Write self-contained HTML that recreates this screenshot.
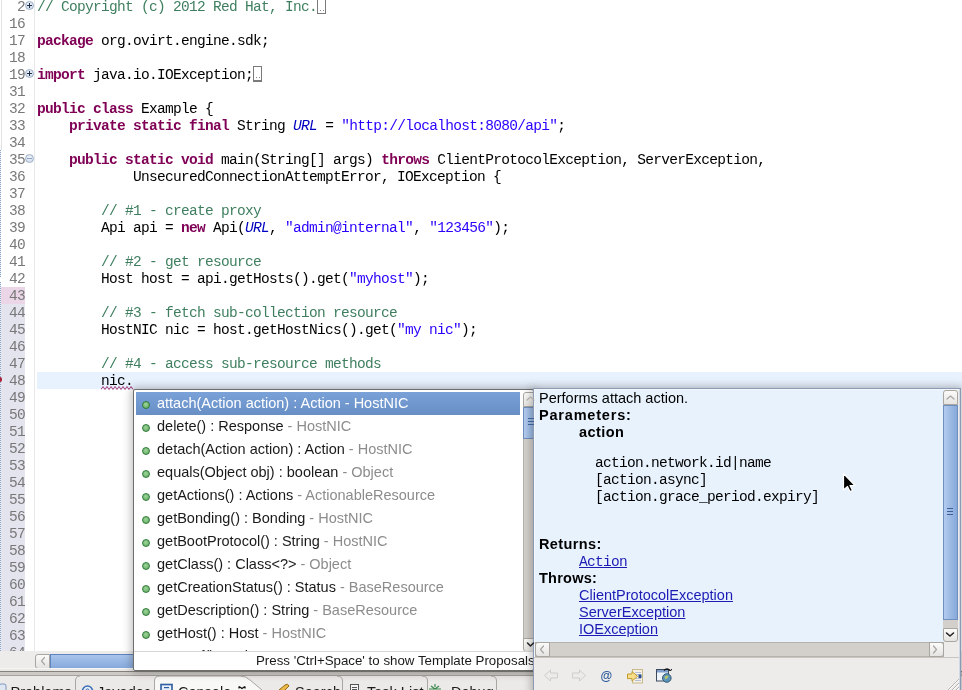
<!DOCTYPE html>
<html><head><meta charset="utf-8">
<style>
*{margin:0;padding:0;box-sizing:border-box}
html,body{width:962px;height:690px;overflow:hidden;background:#edeceb}
body{position:relative;font-family:"Liberation Sans",sans-serif;-webkit-font-smoothing:antialiased}
#editor,#props,#doc,svg.a{will-change:transform}
.a{position:absolute}
#editor{position:absolute;left:0;top:0;width:962px;height:651px;background:#fff;overflow:hidden}
#gutl{position:absolute;left:1px;top:0;width:1px;height:150px;background:#e2e2e2}
#dots{position:absolute;left:0;top:150px;width:1px;height:501px;background:repeating-linear-gradient(#8aa2c8 0 1px,#eef2f8 1px 2px)}
#dgap{position:absolute;left:0;top:277px;width:1px;height:5px;background:#fff}
#lav{position:absolute;left:1px;top:304px;width:24px;height:347px;background:#e4e4ef}
#pink{position:absolute;left:1px;top:287px;width:24px;height:17px;background:#ead6e6}
#redm{position:absolute;left:0;top:376.5px;width:2px;height:5px;border-radius:0 3px 3px 0;background:#a8203a}
#sep{position:absolute;left:34px;top:0;width:1px;height:651px;background:#e9e9e9}
.ln{position:absolute;left:0;width:25px;height:17px;text-align:right;font:14.5px/17px "Liberation Mono",monospace;letter-spacing:-0.7px;color:#787878}
.cl{position:absolute;left:37px;height:17px;white-space:pre;font:14.5px/17px "Liberation Mono",monospace;letter-spacing:-0.7px;color:#000}
.k{color:#7f0055;font-weight:bold}
.c{color:#3f7f5f}
.s{color:#2a00ff}
.f{color:#0000c0;font-style:italic}
.box{position:absolute;width:9px;height:15px;border:1px solid #7a7a7a;background:#fff}
.box:after{content:"";position:absolute;left:2px;bottom:2px;width:1px;height:1px;background:#888;box-shadow:3px 0 #888}
.fold{position:absolute;left:25px;width:9px;height:9px;border-radius:50%;background:radial-gradient(circle at 50% 40%,#f2f6fb,#c5d3e6);border:1px solid #9fb0c8}
.fold:before{content:"";position:absolute;left:1px;top:3px;width:5px;height:1px;background:#1c2b46}
.fold.p:after{content:"";position:absolute;left:3px;top:1px;width:1px;height:5px;background:#1c2b46}
.fold.m:before{background:#8fa2bf}
#curline{position:absolute;left:37px;top:372px;width:925px;height:17px;background:#e8f2fe}
#sq{position:absolute;left:101px;top:385.5px;width:33px;height:4px}
/* editor h scrollbar */
#ehs{position:absolute;left:35px;top:654px;width:500px;height:15px}
#ehs .btn{position:absolute;left:0;top:0;width:15px;height:15px;border:1px solid #a9a6a2;border-radius:3px 0 0 3px;background:linear-gradient(#fbfbfa,#e4e2df)}
#ehs .thumb{position:absolute;left:15px;top:0;width:485px;height:15px;border:1px solid #5d83c0;background:linear-gradient(#a9c5ec,#86a9dc)}
#hsep{position:absolute;left:0;top:671px;width:962px;height:1px;background:#b8b5b1}
#hsep2{position:absolute;left:0;top:672px;width:962px;height:1px;background:#fafafa}
/* tabs */
.tab{position:absolute;top:676px;height:20px;border:1px solid #bdbab5;border-bottom:none;border-radius:8px 8px 0 0;background:#e9e8e6;font:14px/20px "Liberation Sans",sans-serif;color:#1a1a1a;white-space:pre}
.tab.act{background:#f7f7f6;border-radius:8px 14px 0 0}
.tab span{position:absolute;top:-1px}
/* proposals */
#pshadow{position:absolute;left:126px;top:381px;width:420px;height:300px;box-shadow:0 0 8px 2px rgba(0,0,0,0.25);border-radius:3px;left:133px;top:389px;width:401px;height:282px}
#props{position:absolute;left:133px;top:389px;width:401px;height:282px;background:#fff;border:1px solid #6e6e6e;border-radius:2px;overflow:hidden}
.pr{position:absolute;left:2px;width:385px;height:22px;font:14.5px/22px "Liberation Sans",sans-serif;color:#1a1a1a;white-space:pre}
.pr.sel{background:linear-gradient(#7ba2d8,#6890c6);box-shadow:0 1px 0 #6a8fc4;color:#fff;width:384px}
.pr .q{color:#8c8c8c}
.pr.sel .q{color:#fff}
.dot{position:absolute;left:6px;top:9px;width:8px;height:8px;border-radius:50%;background:radial-gradient(circle at 45% 40%,#9ed49a,#5aa85a);border:1px solid #2f7a3a}
.pt{position:absolute;left:21px;top:0}
#plist{position:absolute;left:0;top:0;width:389px;height:262px;overflow:hidden}
#pvs{position:absolute;left:389px;top:2px;width:15px;height:260px}
#pvs .up{position:absolute;left:0;top:0;width:15px;height:15px;border:1px solid #a9a6a2;border-radius:3px 3px 0 0;background:linear-gradient(#fbfbfa,#e6e4e1)}
#pvs .th{position:absolute;left:0;top:15px;width:15px;height:32px;border:1px solid #6f8fbf;background:linear-gradient(90deg,#b3cbef,#8fb0df)}
#pvs .tr{position:absolute;left:0;top:47px;width:15px;height:200px;background:#d3d0cc;border-left:1px solid #b5b2ae}
#pvs .dn{position:absolute;left:0;top:246px;width:15px;height:14px;border:1px solid #a9a6a2;border-radius:0 0 3px 3px;background:linear-gradient(#fbfbfa,#e6e4e1)}
#pstat{position:absolute;left:0;top:261px;width:401px;height:1px;background:#d8d8d8}
#pstatt{position:absolute;left:122px;top:261px;font:13.3px/19px "Liberation Sans",sans-serif;color:#1a1a1a;white-space:pre}
/* doc */
#dshadow{position:absolute;left:533px;top:388px;width:428px;height:310px;box-shadow:0 0 8px 2px rgba(0,0,0,0.25)}
#doc{position:absolute;left:533px;top:388px;width:428px;height:310px;background:#edeceb;border:1px solid #8b9bb3;border-bottom:none;overflow:hidden}
#dcont{position:absolute;left:1px;top:1px;width:409px;height:252px;background:#e8f2fd}
.dt{position:absolute;left:4px;white-space:pre;font:14.5px/17px "Liberation Sans",sans-serif;color:#000}
.db{font-weight:bold;letter-spacing:0.5px}
.dm{position:absolute;white-space:pre;font:14.5px/17px "Liberation Mono",monospace;letter-spacing:-0.7px;color:#000}
.lk{color:#1c1cb4;text-decoration:underline}
#dvs{position:absolute;left:409px;top:1px;width:15px;height:253px}
#dvs .up{position:absolute;left:0;top:0;width:15px;height:15px;border:1px solid #a9a6a2;border-radius:3px 3px 0 0;background:linear-gradient(#fbfbfa,#e6e4e1)}
#dvs .th{position:absolute;left:0;top:15px;width:15px;height:215px;border:1px solid #6f8fbf;background:linear-gradient(90deg,#b3cbef,#86a8da)}
#dvs .tr{position:absolute;left:0;top:230px;width:15px;height:8px;background:#d3d0cc}
#dvs .dn{position:absolute;left:0;top:238px;width:15px;height:14px;border:1px solid #a9a6a2;border-radius:0 0 3px 3px;background:linear-gradient(#fbfbfa,#e6e4e1)}
#dhs{position:absolute;left:1px;top:253px;width:409px;height:15px;background:#d3d0cc;border:1px solid #b5b2ae}
#dhs .l{position:absolute;left:-1px;top:-1px;width:15px;height:15px;border:1px solid #a9a6a2;border-radius:3px 0 0 3px;background:linear-gradient(#fbfbfa,#e6e4e1)}
#dhs .r{position:absolute;right:-1px;top:-1px;width:15px;height:15px;border:1px solid #a9a6a2;border-radius:0 3px 3px 0;background:linear-gradient(#fbfbfa,#e6e4e1)}
#dtsep{position:absolute;left:0px;top:268px;width:425px;height:1px;background:#c8c5c1}
</style></head><body>
<div id="editor">
<div id="gutl"></div>
<div id="dots"></div><div id="dgap"></div>
<div id="pink"></div>
<div id="lav"></div>
<div id="redm"></div>
<div id="sep"></div>
<div class="ln" style="top:-1px">2</div>
<div class="ln" style="top:16px">16</div>
<div class="ln" style="top:33px">17</div>
<div class="ln" style="top:50px">18</div>
<div class="ln" style="top:67px">19</div>
<div class="ln" style="top:84px">31</div>
<div class="ln" style="top:101px">32</div>
<div class="ln" style="top:118px">33</div>
<div class="ln" style="top:135px">34</div>
<div class="ln" style="top:152px">35</div>
<div class="ln" style="top:169px">36</div>
<div class="ln" style="top:186px">37</div>
<div class="ln" style="top:203px">38</div>
<div class="ln" style="top:220px">39</div>
<div class="ln" style="top:237px">40</div>
<div class="ln" style="top:254px">41</div>
<div class="ln" style="top:271px">42</div>
<div class="ln" style="top:288px">43</div>
<div class="ln" style="top:305px">44</div>
<div class="ln" style="top:322px">45</div>
<div class="ln" style="top:339px">46</div>
<div class="ln" style="top:356px">47</div>
<div class="ln" style="top:373px">48</div>
<div class="ln" style="top:390px">49</div>
<div class="ln" style="top:407px">50</div>
<div class="ln" style="top:424px">51</div>
<div class="ln" style="top:441px">52</div>
<div class="ln" style="top:458px">53</div>
<div class="ln" style="top:475px">54</div>
<div class="ln" style="top:492px">55</div>
<div class="ln" style="top:509px">56</div>
<div class="ln" style="top:526px">57</div>
<div class="ln" style="top:543px">58</div>
<div class="ln" style="top:560px">59</div>
<div class="ln" style="top:577px">60</div>
<div class="ln" style="top:594px">61</div>
<div class="ln" style="top:611px">62</div>
<div class="ln" style="top:628px">63</div>
<div class="ln" style="top:645px">64</div>
<div class="fold p" style="top:1px"></div>
<div class="fold p" style="top:69px"></div>
<div class="fold m" style="top:154px"></div>
<div id="curline"></div>
<div class="cl" style="top:-1px"><span class="c">// Copyright (c) 2012 Red Hat, Inc.</span><span class="box"></span></div>
<div class="cl" style="top:16px"></div>
<div class="cl" style="top:33px"><b class="k">package</b> org.ovirt.engine.sdk;</div>
<div class="cl" style="top:50px"></div>
<div class="cl" style="top:67px"><b class="k">import</b> java.io.IOException;<span class="box"></span></div>
<div class="cl" style="top:84px"></div>
<div class="cl" style="top:101px"><b class="k">public</b> <b class="k">class</b> Example {</div>
<div class="cl" style="top:118px">    <b class="k">private</b> <b class="k">static</b> <b class="k">final</b> String <i class="f">URL</i> = <span class="s">&quot;http://localhost:8080/api&quot;</span>;</div>
<div class="cl" style="top:135px"></div>
<div class="cl" style="top:152px">    <b class="k">public</b> <b class="k">static</b> <b class="k">void</b> main(String[] args) <b class="k">throws</b> ClientProtocolException, ServerException,</div>
<div class="cl" style="top:169px">            UnsecuredConnectionAttemptError, IOException {</div>
<div class="cl" style="top:186px"></div>
<div class="cl" style="top:203px">        <span class="c">// #1 - create proxy</span></div>
<div class="cl" style="top:220px">        Api api = <b class="k">new</b> Api(<i class="f">URL</i>, <span class="s">&quot;admin@internal&quot;</span>, <span class="s">&quot;123456&quot;</span>);</div>
<div class="cl" style="top:237px"></div>
<div class="cl" style="top:254px">        <span class="c">// #2 - get resource</span></div>
<div class="cl" style="top:271px">        Host host = api.getHosts().get(<span class="s">&quot;myhost&quot;</span>);</div>
<div class="cl" style="top:288px"></div>
<div class="cl" style="top:305px">        <span class="c">// #3 - fetch sub-collection resource</span></div>
<div class="cl" style="top:322px">        HostNIC nic = host.getHostNics().get(<span class="s">&quot;my nic&quot;</span>);</div>
<div class="cl" style="top:339px"></div>
<div class="cl" style="top:356px">        <span class="c">// #4 - access sub-resource methods</span></div>
<div class="cl" style="top:373px">        <span class="sq">nic.</span></div>
<div class="cl" style="top:390px"></div>
<div class="cl" style="top:407px"></div>
<div class="cl" style="top:424px"></div>
<div class="cl" style="top:441px"></div>
<div class="cl" style="top:458px"></div>
<div class="cl" style="top:475px"></div>
<div class="cl" style="top:492px"></div>
<div class="cl" style="top:509px"></div>
<div class="cl" style="top:526px"></div>
<div class="cl" style="top:543px"></div>
<div class="cl" style="top:560px"></div>
<div class="cl" style="top:577px"></div>
<div class="cl" style="top:594px"></div>
<div class="cl" style="top:611px"></div>
<div class="cl" style="top:628px"></div>
<div class="cl" style="top:645px"></div>
<div class="box" style="left:317px;top:-1px"></div>
<div class="box" style="left:253px;top:66px"></div>
<svg id="sq" width="33" height="4" viewBox="0 0 33 4"><polyline points="0,3.5 2,0.5 4,3.5 6,0.5 8,3.5 10,0.5 12,3.5 14,0.5 16,3.5 18,0.5 20,3.5 22,0.5 24,3.5 26,0.5 28,3.5 30,0.5 32,3.5" fill="none" stroke="#a23a78" stroke-width="1"/></svg>
</div>
<div id="ehs"><div class="btn"></div><div class="thumb"></div></div>
<svg class="a" style="left:0;top:668px" width="962" height="22" viewBox="0 668 962 22">
<rect x="0" y="668" width="962" height="1" fill="#f6f5f4"/>
<rect x="0" y="669" width="962" height="2" fill="#e9e8e6"/>
<rect x="0" y="671" width="962" height="1" fill="#85817c"/>
<rect x="0" y="672" width="962" height="3" fill="#cdcac6"/>
<rect x="0" y="675" width="962" height="1" fill="#a6a29d"/>
<rect x="0" y="676" width="962" height="14" fill="#ebeae8"/>
<!-- Javadoc left edge -->
<path d="M75.5,690 V681 Q75.5,676 80,676" fill="none" stroke="#a9a5a0" stroke-width="1"/>
<!-- Console active -->
<path d="M154.5,690 V681 Q154.5,676 160,676 H240 Q246,676 250,680 L262,690 Z" fill="#f8f8f7"/>
<path d="M154.5,690 V681 Q154.5,676 160,676 H240 Q246,676 250,680 L262,690" fill="none" stroke="#a9a5a0" stroke-width="1"/>
<!-- Search right edge -->
<path d="M337,676 Q342.5,676 342.5,681 V690" fill="none" stroke="#a9a5a0" stroke-width="1"/>
<path d="M422,676 Q427.5,676 427.5,681 V690" fill="none" stroke="#a9a5a0" stroke-width="1"/>
<path d="M491,676 Q496.5,676 496.5,681 V690" fill="none" stroke="#a9a5a0" stroke-width="1"/>
<!-- icons -->
<rect x="-1" y="684" width="7" height="8" rx="2" fill="#dfe7f2" stroke="#7e98c0"/>
<circle cx="87.5" cy="691" r="5" fill="#e9f0fa" stroke="#3c6fb5" stroke-width="1.6"/><circle cx="87.5" cy="690.5" r="1.6" fill="none" stroke="#3c6fb5" stroke-width="1"/>
<rect x="161" y="684.5" width="11" height="10" fill="#e6effb" stroke="#2d5d9f" stroke-width="1.6"/>
<rect x="164" y="687" width="5" height="1.2" fill="#2d5d9f"/>
<path d="M239,686.5 l3,2 l3,-2 M239,686.5 v2 M245,686.5 v2" fill="none" stroke="#111" stroke-width="1.3"/>
<path d="M279,690 l6,-5 q3,-2 4,1 l-5,5z" fill="#e8b84a" stroke="#9a6a10" stroke-width="1"/>
<rect x="350.5" y="684.5" width="8" height="9" fill="#f4f4f4" stroke="#555"/>
<path d="M352,687.5 h5 M352,689.5 h5" stroke="#555"/>
<path d="M431,686 l4,3 l4,-3 M435,684 v3 M429,689 h12" fill="none" stroke="#3b8a4e" stroke-width="1.2"/>
<text x="10.5" y="696.5" font-family="Liberation Sans" font-size="14.5" fill="#1b1b1b">Problems</text>
<text x="97" y="696.5" font-family="Liberation Sans" font-size="14.5" fill="#1b1b1b">Javadoc</text>
<text x="178" y="696.5" font-family="Liberation Sans" font-size="14.5" fill="#1b1b1b">Console</text>
<text x="295" y="696.5" font-family="Liberation Sans" font-size="14.5" fill="#1b1b1b">Search</text>
<text x="367" y="696.5" font-family="Liberation Sans" font-size="14.5" fill="#1b1b1b">Task List</text>
<text x="451" y="696.5" font-family="Liberation Sans" font-size="14.5" fill="#1b1b1b">Debug</text>
</svg>

<div id="pshadow"></div>
<div id="props">
<div id="plist">
<div class="pr sel" style="top:2px"><span class="dot"></span><span class="pt">attach(Action action) : Action<span class="q"> - HostNIC</span></span></div>
<div class="pr" style="top:25px"><span class="dot"></span><span class="pt">delete() : Response<span class="q"> - HostNIC</span></span></div>
<div class="pr" style="top:48px"><span class="dot"></span><span class="pt">detach(Action action) : Action<span class="q"> - HostNIC</span></span></div>
<div class="pr" style="top:71px"><span class="dot"></span><span class="pt">equals(Object obj) : boolean<span class="q"> - Object</span></span></div>
<div class="pr" style="top:94px"><span class="dot"></span><span class="pt">getActions() : Actions<span class="q"> - ActionableResource</span></span></div>
<div class="pr" style="top:117px"><span class="dot"></span><span class="pt">getBonding() : Bonding<span class="q"> - HostNIC</span></span></div>
<div class="pr" style="top:140px"><span class="dot"></span><span class="pt">getBootProtocol() : String<span class="q"> - HostNIC</span></span></div>
<div class="pr" style="top:163px"><span class="dot"></span><span class="pt">getClass() : Class&lt;?&gt;<span class="q"> - Object</span></span></div>
<div class="pr" style="top:186px"><span class="dot"></span><span class="pt">getCreationStatus() : Status<span class="q"> - BaseResource</span></span></div>
<div class="pr" style="top:209px"><span class="dot"></span><span class="pt">getDescription() : String<span class="q"> - BaseResource</span></span></div>
<div class="pr" style="top:232px"><span class="dot"></span><span class="pt">getHost() : Host<span class="q"> - HostNIC</span></span></div>
<div class="pr" style="top:255px"><span class="dot"></span><span class="pt">getHref() : String<span class="q"> - BaseResource</span></span></div>
</div>
<div id="pvs"><div class="up"></div><div class="th"></div><div class="tr"></div><div class="dn"></div></div>
<div id="pstat"></div>
<div id="pstatt">Press 'Ctrl+Space' to show Template Proposals</div>
</div>
<div id="dshadow"></div>
<div id="doc">
<div class="a" style="left:0;top:0;width:426px;height:1px;background:#f4f8fd"></div><div class="a" style="left:0;top:0;width:1px;height:268px;background:#f4f8fd"></div><div class="a" style="left:425px;top:0;width:1px;height:310px;background:#cfd8e4"></div>
<div id="dcont">
<div class="dt" style="top:0px">Performs attach action.</div>
<div class="dt db" style="top:17px;letter-spacing:0.8px">Parameters:</div>
<div class="dt db" style="top:34px;left:44px;letter-spacing:0.45px">action</div>
<div class="dm" style="top:65px;left:60px">action.network.id|name</div>
<div class="dm" style="top:82px;left:60px">[action.async]</div>
<div class="dm" style="top:99px;left:60px">[action.grace_period.expiry]</div>
<div class="dt db" style="top:146px;letter-spacing:0.4px">Returns:</div>
<div class="dm lk" style="top:164px;left:44px">Action</div>
<div class="dt db" style="top:180px;letter-spacing:0.25px">Throws:</div>
<div class="dt lk" style="top:197px;left:44px">ClientProtocolException</div>
<div class="dt lk" style="top:214px;left:44px">ServerException</div>
<div class="dt lk" style="top:231px;left:44px">IOException</div>
</div>
<div id="dvs"><div class="up"></div><div class="th"></div><div class="tr"></div><div class="dn"></div></div>
<div id="dhs"><div class="l"></div><div class="r"></div></div>
<div id="dtsep"></div>
<svg class="a" style="left:0;top:0" width="427" height="310" viewBox="533 388 427 310">
<path d="M543.5,674.5 L549.5,669 V672 H556.5 V677 H549.5 V680 Z" fill="#ecebe9" stroke="#cfcdc9" stroke-width="1" stroke-linejoin="round"/>
<path d="M584.5,674.5 L578.5,669 V672 H571.5 V677 H578.5 V680 Z" fill="#ecebe9" stroke="#cfcdc9" stroke-width="1" stroke-linejoin="round"/>
<text x="599.5" y="678.5" font-family="Liberation Sans" font-weight="bold" font-size="12" fill="#2d5a9a">@</text>
<rect x="631.5" y="668.5" width="10" height="13.5" fill="#f4f1e4" stroke="#c9b98e"/>
<path d="M634,671.5 h6 M634,673.5 h6 M634,677.5 h6 M634,679.5 h6" stroke="#b5c0d6"/>
<rect x="637.5" y="673.5" width="3" height="3.5" fill="#2a4f8f"/>
<path d="M626.5,673 h4.5 v-2.5 l5.5,4.8 l-5.5,4.8 v-2.5 h-4.5z" fill="#f7de8a" stroke="#c19a2e"/>
<rect x="655.5" y="668.5" width="12" height="11.5" fill="#eef4fa" stroke="#3d4a5e"/>
<rect x="656" y="669" width="11" height="2.5" fill="#7f9fcc"/>
<circle cx="665.8" cy="677" r="4.3" fill="#5e93b8" stroke="#2f5a78"/>
<path d="M663.5,676 q2,-2.5 4,-1 q-0.5,2.5 -3,3.5z" fill="#b6c86a"/>
<path d="M663,669.5 q3,-3 6,0" fill="none" stroke="#111" stroke-width="1.3"/>
<path d="M668,668.5 l1.5,1.5 l1.2,-2" fill="none" stroke="#111" stroke-width="1"/>
<path d="M946,690 l12,-12 M950,690 l8,-8 M954,690 l4,-4" stroke="#b8b5b0" stroke-width="1"/>
<path d="M947,690 l11,-11 M951,690 l7,-7 M955,690 l3,-3" stroke="#fbfbfb" stroke-width="1"/>
</svg>
</div>
<svg class="a" style="left:840px;top:470px" width="20" height="25" viewBox="840 470 20 25"><path d="M843.5,473.5 V490 L847.5,486.5 L850,491.5 L852.5,490.5 L850,485.5 L855,485.5 Z" fill="#000" stroke="#fff" stroke-width="1.2" stroke-linejoin="round"/></svg>
<svg class="a" style="left:0;top:0;pointer-events:none" width="962" height="690" viewBox="0 0 962 690">
<g fill="none" stroke-width="1.2" stroke-linecap="round" stroke-linejoin="round">
<path d="M44.5,657.5 l-3,3.5 l3,3.5" stroke="#a8a6a2"/>
<path d="M527,400 l3.5,-3 l3.5,3" stroke="#b0aeaa"/>
<path d="M527.5,643 l3,3 l3,-3" stroke="#222" stroke-width="1.5"/>
<path d="M947,399 l3.5,-3 l3.5,3" stroke="#a8a6a2"/>
<path d="M946.5,633 l3.5,3 l3.5,-3" stroke="#222" stroke-width="1.6"/>
<path d="M543.5,646 l-3,3.5 l3,3.5" stroke="#a8a6a2"/>
<path d="M933.5,646 l3,3.5 l-3,3.5" stroke="#a8a6a2"/>
</g>
<path d="M528,418.5 h6 M528,421.5 h6 M528,424.5 h6" stroke="#3c5f95" stroke-width="1"/>
<path d="M947,508.5 h6 M947,511.5 h6 M947,514.5 h6" stroke="#3c5f95" stroke-width="1"/>
</svg>
</body></html>
